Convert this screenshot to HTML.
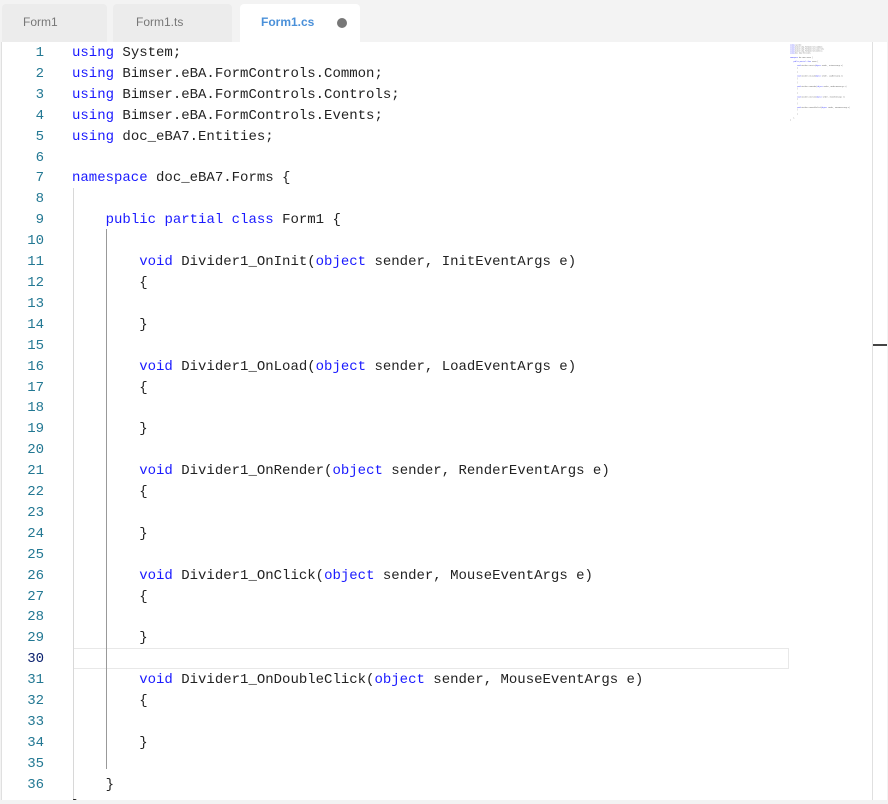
<!DOCTYPE html>
<html><head><style>
*{margin:0;padding:0;box-sizing:border-box}
body{width:888px;height:804px;background:#f3f3f3;font-family:"Liberation Sans",sans-serif;position:relative;overflow:hidden}
.tab{position:absolute;top:4px;height:38px;background:#ececec;border-radius:4px 4px 0 0;font-size:12px;color:#777;line-height:36px}
.tab.a{background:#fff;color:#4a90d9;font-weight:bold}
.ed{position:absolute;left:1px;top:42px;width:886px;height:758px;background:#fff;overflow:hidden;border-left:1px solid #e0e0e0}
.code{position:absolute;left:70px;top:1px;font-family:"Liberation Mono",monospace;font-size:14px;color:#222;white-space:pre;line-height:20.9px}
.k{color:#1a1aff}
.g{position:absolute;width:1px}
</style></head><body>
<div class="tab" style="left:2px;width:105px;padding-left:21px">Form1</div>
<div class="tab" style="left:113px;width:119px;padding-left:23px">Form1.ts</div>
<div class="tab a" style="left:240px;width:120px;padding-left:21px">Form1.cs<span style="position:absolute;left:97px;top:14px;width:10px;height:10px;border-radius:50%;background:#777"></span></div>
<div class="ed">
<div style="position:absolute;left:71px;top:606px;width:716px;height:21px;border:1px solid #e8e8e8"></div>
<div class="g" style="left:71px;top:146px;height:620px;background:#d8d8d8"></div>
<div class="g" style="left:104px;top:187px;height:540px;background:#999"></div>
<div style="position:absolute;left:0;top:1px;font-family:'Liberation Mono',monospace;font-size:14px;color:#237893;white-space:pre;line-height:20.9px;width:42px;text-align:right">1
2
3
4
5
6
7
8
9
10
11
12
13
14
15
16
17
18
19
20
21
22
23
24
25
26
27
28
29
<span style="color:#0b216f">30</span>
31
32
33
34
35
36
37</div>
<div class="code"><span class="k">using</span> System;
<span class="k">using</span> Bimser.eBA.FormControls.Common;
<span class="k">using</span> Bimser.eBA.FormControls.Controls;
<span class="k">using</span> Bimser.eBA.FormControls.Events;
<span class="k">using</span> doc_eBA7.Entities;

<span class="k">namespace</span> doc_eBA7.Forms {

    <span class="k">public</span> <span class="k">partial</span> <span class="k">class</span> Form1 {

        <span class="k">void</span> Divider1_OnInit(<span class="k">object</span> sender, InitEventArgs e)
        {

        }

        <span class="k">void</span> Divider1_OnLoad(<span class="k">object</span> sender, LoadEventArgs e)
        {

        }

        <span class="k">void</span> Divider1_OnRender(<span class="k">object</span> sender, RenderEventArgs e)
        {

        }

        <span class="k">void</span> Divider1_OnClick(<span class="k">object</span> sender, MouseEventArgs e)
        {

        }

        <span class="k">void</span> Divider1_OnDoubleClick(<span class="k">object</span> sender, MouseEventArgs e)
        {

        }

    }
}</div>
<div style="position:absolute;left:788px;top:2px;transform:scale(0.105,0.1);transform-origin:0 0;font-family:'Liberation Mono',monospace;font-size:14px;color:#555;white-space:pre;line-height:20.9px"><span class="k">using</span> System;
<span class="k">using</span> Bimser.eBA.FormControls.Common;
<span class="k">using</span> Bimser.eBA.FormControls.Controls;
<span class="k">using</span> Bimser.eBA.FormControls.Events;
<span class="k">using</span> doc_eBA7.Entities;

<span class="k">namespace</span> doc_eBA7.Forms {

    <span class="k">public</span> <span class="k">partial</span> <span class="k">class</span> Form1 {

        <span class="k">void</span> Divider1_OnInit(<span class="k">object</span> sender, InitEventArgs e)
        {

        }

        <span class="k">void</span> Divider1_OnLoad(<span class="k">object</span> sender, LoadEventArgs e)
        {

        }

        <span class="k">void</span> Divider1_OnRender(<span class="k">object</span> sender, RenderEventArgs e)
        {

        }

        <span class="k">void</span> Divider1_OnClick(<span class="k">object</span> sender, MouseEventArgs e)
        {

        }

        <span class="k">void</span> Divider1_OnDoubleClick(<span class="k">object</span> sender, MouseEventArgs e)
        {

        }

    }
}</div>
<div style="position:absolute;left:870px;top:0;width:1px;height:758px;background:#e0e0e0"></div>
<div style="position:absolute;left:871px;top:302px;width:14px;height:2px;background:#444"></div>
<div style="position:absolute;left:885px;top:0;width:1px;height:758px;background:#e8e8e8"></div>
</div>
</body></html>
